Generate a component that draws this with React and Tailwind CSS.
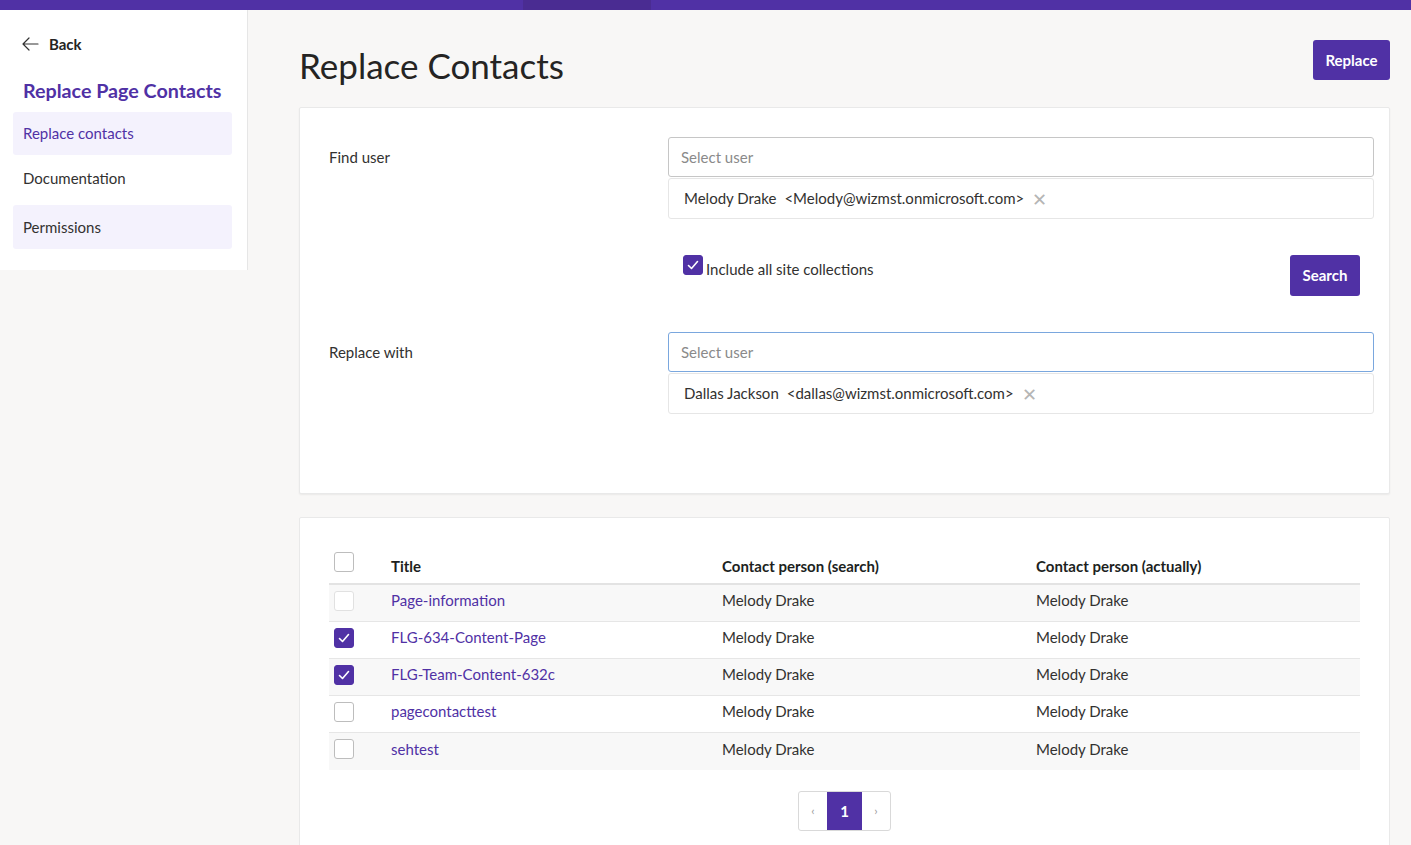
import React from "react";

const Check = ({ checked, light }) => (
  <div
    className={`w-5 h-5 rounded-[3px] flex items-center justify-center shrink-0 ${
      checked ? "bg-[#5031a5] border border-[#5031a5]" : light ? "border border-[#e1e1e1] bg-white" : "border border-[#bdbdbd] bg-white"
    }`}
  >
    {checked && (
      <svg width="14" height="14" viewBox="0 0 14 14" fill="none">
        <path d="M2.5 7.5 L5.5 10.5 L11.5 3.5" stroke="white" strokeWidth="1.6" strokeLinecap="round" strokeLinejoin="round" />
      </svg>
    )}
  </div>
);

const rows = [
  { t: "Page-information", c: false, light: true },
  { t: "FLG-634-Content-Page", c: true },
  { t: "FLG-Team-Content-632c", c: true },
  { t: "pagecontacttest", c: false },
  { t: "sehtest", c: false },
];

function UserPicker({ name, email, focused }) {
  return (
    <div className="flex flex-col gap-[1px]">
      <div
        className={`h-10 rounded-[3px] border bg-white flex items-center px-3 text-[15px] text-[#8a8a8a] ${
          focused ? "border-[#7aa7de]" : "border-[#c6c6c6]"
        }`}
      >
        Select user
      </div>
      <div className="h-[41px] rounded-[3px] border border-[#e6e6e6] bg-white flex items-center pl-[15px] text-[15px] text-[#323130]">
        <span>{name}</span>
        <span className="ml-2">{email}</span>
        <span className="ml-[8px] text-[#b5b5b5] text-[18px] leading-none">✕</span>
      </div>
    </div>
  );
}

export default function App() {
  return (
    <div className="min-h-[845px] bg-[#f8f7f6] font-['Lato','Liberation_Sans',sans-serif] text-[#323130]">
      <div className="h-[10px] bg-[#5031a5] flex">
        <div className="w-[523px]" />
        <div className="w-[128px] bg-[#4a2c92]" />
      </div>
      <div className="flex">
        <aside className="w-[248px] h-[260px] bg-white border-r border-[#e6e6e6] shrink-0 pl-[13px] pr-[15px] pt-[23px]">
          <div className="h-[22px] flex items-center gap-[10px] pl-[9px] text-[15px] font-bold text-[#252423]">
            <svg width="17" height="14" viewBox="0 0 17 14" fill="none">
              <path d="M7 1 L1 7 L7 13 M1 7 H16" stroke="#333" strokeWidth="1.2" strokeLinecap="round" strokeLinejoin="round" />
            </svg>
            <span>Back</span>
          </div>
          <div className="pl-[10px] mt-[22px] h-[28px] text-[19.7px] font-bold text-[#5031a5] leading-[28px] whitespace-nowrap">Replace Page Contacts</div>
          <div className="mt-[7px] h-[43px] rounded-[3px] bg-[#f4f2fd] flex items-center pl-[10px] text-[15px] text-[#5031a5]">Replace contacts</div>
          <div className="h-[47px] flex items-center pl-[10px] text-[15px] text-[#323130]">Documentation</div>
          <div className="mt-[3px] h-[44px] rounded-[3px] bg-[#f4f2fd] flex items-center pl-[10px] text-[15px] text-[#323130]">Permissions</div>
        </aside>
        <main className="flex-1 pl-[51px] pr-[21px]">
          <div className="flex items-start justify-between pt-[30px]">
            <h1 className="text-[35px] leading-[52px] text-[#252423] -mt-[1px]">Replace Contacts</h1>
            <button className="h-10 w-[77px] rounded-[3px] bg-[#5031a5] text-white text-[15px] font-bold">Replace</button>
          </div>
          <section className="mt-[16px] bg-white border border-[#e9e9e9] rounded-[2px] shadow-[0_1px_2px_rgba(0,0,0,0.06)] pl-[29px] pr-[15px] pt-[29px] pb-[79px]">
            <div className="flex">
              <div className="w-[339px] h-10 flex items-center text-[15px]">Find user</div>
              <div className="flex-1">
                <UserPicker name="Melody Drake" email="<Melody@wizmst.onmicrosoft.com>" />
                <div className="flex items-start justify-between mt-[36px] pl-[15px] pr-[14px]">
                  <label className="flex items-start gap-[3px] text-[15px] text-[#323130]">
                    <Check checked />
                    <span className="pt-[4px] leading-[20px]">Include all site collections</span>
                  </label>
                  <button className="h-[41px] w-[70px] rounded-[3px] bg-[#5031a5] text-white text-[15px] font-bold">Search</button>
                </div>
              </div>
            </div>
            <div className="flex mt-[36px]">
              <div className="w-[339px] h-10 flex items-center text-[15px]">Replace with</div>
              <div className="flex-1">
                <UserPicker name="Dallas Jackson" email="<dallas@wizmst.onmicrosoft.com>" focused />
              </div>
            </div>
          </section>
          <section className="mt-[23px] bg-white border border-[#e9e9e9] rounded-[2px] px-[29px] pt-[34px] pb-[30px]">
            <div className="flex items-center h-[33px] pb-[3px] border-b-2 border-[#e3e3e3] text-[15px] font-bold text-[#201f1e]">
              <div className="w-[62px] pl-[5px] self-start"><Check /></div>
              <div className="w-[331px]">Title</div>
              <div className="w-[314px]">Contact person (search)</div>
              <div className="flex-1">Contact person (actually)</div>
            </div>
            {rows.map((r, i) => (
              <div
                key={r.t}
                className={`flex items-center h-[37px] pb-[5px] text-[15px] ${i % 2 === 0 ? "bg-[#f8f8f8]" : "bg-white"} ${i < rows.length - 1 ? "border-b border-[#e6e6e6]" : ""}`}
              >
                <div className="w-[62px] pl-[5px]"><Check checked={r.c} light={r.light} /></div>
                <div className="w-[331px] text-[#5031a5]">{r.t}</div>
                <div className="w-[314px] text-[#323130]">Melody Drake</div>
                <div className="flex-1 text-[#323130]">Melody Drake</div>
              </div>
            ))}
            <div className="flex justify-center mt-[21px]">
              <div className="flex h-10 border border-[#d9d9d9] rounded-[3px] overflow-hidden">
                <div className="w-[28px] flex items-center justify-center text-[#9a9a9a] text-[12px]">‹</div>
                <div className="w-[35px] bg-[#5031a5] text-white flex items-center justify-center text-[15px] font-bold">1</div>
                <div className="w-[28px] flex items-center justify-center text-[#9a9a9a] text-[12px]">›</div>
              </div>
            </div>
          </section>
        </main>
      </div>
    </div>
  );
}
